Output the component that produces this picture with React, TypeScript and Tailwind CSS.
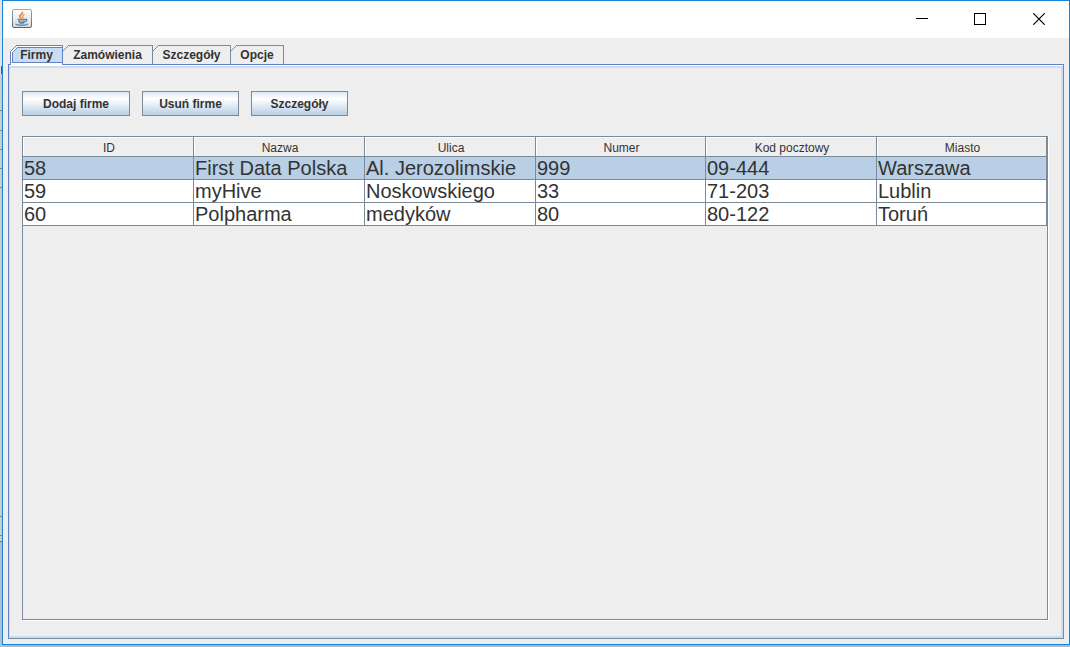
import { useState } from "react";

const tabs = [
  { name: "Firmy", width: "w-[53px]" },
  { name: "Zamówienia", width: "w-[90px]" },
  { name: "Szczegóły", width: "w-[78px]" },
  { name: "Opcje", width: "w-[53px]" },
];

const columns = [
  { name: "ID", width: "w-[171px]" },
  { name: "Nazwa", width: "w-[171px]" },
  { name: "Ulica", width: "w-[171px]" },
  { name: "Numer", width: "w-[170px]" },
  { name: "Kod pocztowy", width: "w-[171px]" },
  { name: "Miasto", width: "w-[170px]" },
];

const rows = [
  ["58", "First Data Polska", "Al. Jerozolimskie", "999", "09-444", "Warszawa"],
  ["59", "myHive", "Noskowskiego", "33", "71-203", "Lublin"],
  ["60", "Polpharma", "medyków", "80", "80-122", "Toruń"],
];

function JavaIcon() {
  return (
    <svg width="20" height="20" viewBox="0 0 20 20" aria-hidden="true">
      <defs>
        <linearGradient id="plate" x1="0" y1="0" x2="0" y2="1">
          <stop offset="0" stopColor="#ffffff" />
          <stop offset="1" stopColor="#d5d9dc" />
        </linearGradient>
        <linearGradient id="rim" x1="0" y1="0" x2="0" y2="1">
          <stop offset="0" stopColor="#9aa9b2" />
          <stop offset="1" stopColor="#4f6878" />
        </linearGradient>
      </defs>
      <rect x="0.5" y="0.5" width="19" height="18" rx="1.5" fill="url(#plate)" stroke="url(#rim)" />
      <path d="M10.400 2.800c1.200 2-3.600 3-2.600 5 .3.700 1.200 1.200 1.500 2" fill="none" stroke="#e8883a" strokeWidth="1.800" />
      <path d="M12.600 5.300c-2 .8-2.600 1.700-1.700 2.700.5.700.2 1.200-.4 1.700" fill="none" stroke="#ec9a55" strokeWidth="1.400" />
      <path d="M5.500 10.300c1.500.6 5.800.6 7.500 0M6.500 11.500c.2 2.200 5.400 2.200 6 0M13 10.300c2.600-.5 2.300 2-.3 2.500M7 13.600c1.500.6 4 .6 5.500 0" fill="none" stroke="#5f86a5" strokeWidth="1.300" />
      <path d="M4 14.800c-.5 1.700 9.500 2 12 .2" fill="none" stroke="#6a8fad" strokeWidth="1.500" />
    </svg>
  );
}

function SelectedTabShape() {
  return (
    <svg className="absolute top-0 left-0" width="53" height="23" shapeRendering="crispEdges" aria-hidden="true">
      <path d="M1 23V6L6 1H52V23Z" fill="#ffffff" />
      <path d="M2 18V7L7 2H52V18Z" fill="#c8ddf2" />
      <path d="M1 21H53V23H1Z" fill="#c8ddf2" />
      <path d="M0.500 19V6.500L6.500 0.500H52.500V19" fill="none" stroke="#6382bf" />
      <path d="M2.500 18V7.500L7.500 2.500H52M2 17.500H52" fill="none" stroke="#6382bf" />
    </svg>
  );
}

function TabCorner() {
  return (
    <svg className="absolute -top-px left-0" width="7" height="7" aria-hidden="true">
      <rect width="6" height="2" fill="#eeeeee" />
      <path d="M0 6L6 0" stroke="#7a8a99" />
    </svg>
  );
}

function ActionButton({ label, width }: { label: string; width: string }) {
  return (
    <button
      type="button"
      className={`${width} h-[25px] border border-[#7a8a99] bg-linear-to-b from-[#dde8f3] via-white via-30% to-[#b8cfe5] text-xs font-bold`}
    >
      {label}
    </button>
  );
}

export default function App() {
  const [tab, setTab] = useState(0);
  const [selected, setSelected] = useState(0);

  return (
    <div className="flex min-h-screen bg-[#aebaca] font-['Liberation_Sans',Arial,sans-serif] text-[#333333]">
      <div className="flex w-[2px] shrink-0 flex-col bg-[#cccccc]" aria-hidden="true">
        <div className="h-[66px] bg-[#e1e3e6]" />
        <div className="h-[8px] border-r border-[#555555] bg-[#e1e3e6]" />
        <div className="h-[37px] border-b border-[#7a8a99]" />
        <div className="h-[20px] border-b border-[#7a8a99]" />
        <div className="h-[19px] border-b border-[#7a8a99]" />
        <div className="h-[19px] border-b border-[#7a8a99]" />
        <div className="h-[19px] border-b border-[#7a8a99]" />
        <div className="h-[329px] border-b border-[#7a8a99]" />
        <div className="h-[19px] border-b border-[#7a8a99]" />
        <div className="h-[6px] border-b border-[#4a7fb0]" />
        <div className="flex-1 bg-[#b5c0ce]" />
      </div>
      <div className="mb-[2px] flex min-w-0 flex-1 flex-col border border-[#1883d7] bg-[#eeeeee]">
        <header className="flex h-[37px] items-center justify-between bg-white pl-[9px]">
          <div className="pb-[2px]">
            <JavaIcon />
          </div>
          <div className="flex h-full pb-px">
            <button type="button" aria-label="Minimize" className="flex w-[58px] items-center justify-center">
              <svg width="12" height="12" shapeRendering="crispEdges"><path d="M0 5.500H12" stroke="#000" /></svg>
            </button>
            <button type="button" aria-label="Maximize" className="flex w-[58px] items-center justify-center">
              <svg width="12" height="12" shapeRendering="crispEdges"><rect x="0.500" y="0.500" width="11" height="11" fill="none" stroke="#000" /></svg>
            </button>
            <button type="button" aria-label="Close" className="flex w-[60px] items-center justify-center">
              <svg width="12" height="12"><path d="M0.300 0.300L11.700 11.700M11.700 0.300L0.300 11.700" stroke="#000" strokeWidth="1.200" /></svg>
            </button>
          </div>
        </header>

        <div className="flex flex-1 flex-col px-[5px] pt-[7px] pb-[5px]">
          <div className="flex h-[19px] pl-[2px]" role="tablist">
            {tabs.map((t, i) => (
              <button
                key={t.name}
                type="button"
                role="tab"
                aria-selected={tab === i}
                onClick={() => setTab(i)}
                className={`${t.width} relative text-xs font-bold ${tab === i ? "z-10" : "border-t border-r border-[#7a8a99]"}`}
              >
                {tab === i ? <SelectedTabShape /> : <TabCorner />}
                <span className="relative">{t.name}</span>
              </button>
            ))}
          </div>

          <main className="flex flex-1 flex-col border border-t-[#6382bf] border-r-[#7a8a99] border-b-[#7a8a99] border-l-[#6382bf]">
            <div className="flex flex-1 flex-col border-t border-l border-t-white border-l-[#c8ddf2]">
              <div className="flex flex-1 flex-col border-t-2 border-r-2 border-b-2 border-[#c8ddf2] pt-[23px] pr-[13px] pb-[16px] pl-[12px]">
                <div className="flex gap-3">
                  <ActionButton label="Dodaj firme" width="w-[108px]" />
                  <ActionButton label="Usuń firme" width="w-[97px]" />
                  <ActionButton label="Szczegóły" width="w-[97px]" />
                </div>

                <div className="mt-5 flex-1 border border-[#7a8a99] shadow-[1px_1px_0_#ffffff]">
                  <table className="w-full table-fixed border-separate border-spacing-0">
                    <colgroup>
                      {columns.map((c) => (
                        <col key={c.name} className={c.width} />
                      ))}
                    </colgroup>
                    <thead>
                      <tr>
                        {columns.map((c) => (
                          <th
                            key={c.name}
                            scope="col"
                            className="h-5 border-r border-b border-[#7a8a99] p-0 pt-[2px] pl-[2px] text-xs leading-4 font-normal shadow-[inset_1px_1px_0_#ffffff]"
                          >
                            {c.name}
                          </th>
                        ))}
                      </tr>
                    </thead>
                    <tbody>
                      {rows.map((row, i) => (
                        <tr
                          key={row[0]}
                          onClick={() => setSelected(i)}
                          className={selected === i ? "bg-[#b8cfe5]" : "bg-white"}
                        >
                          {row.map((cell, j) => (
                            <td
                              key={j}
                              className="h-[23px] overflow-hidden border-r border-b border-[#7a8a99] p-0 pl-px text-xl leading-[22px] whitespace-nowrap"
                            >
                              {cell}
                            </td>
                          ))}
                        </tr>
                      ))}
                    </tbody>
                  </table>
                </div>
              </div>
            </div>
          </main>
        </div>
      </div>
    </div>
  );
}
